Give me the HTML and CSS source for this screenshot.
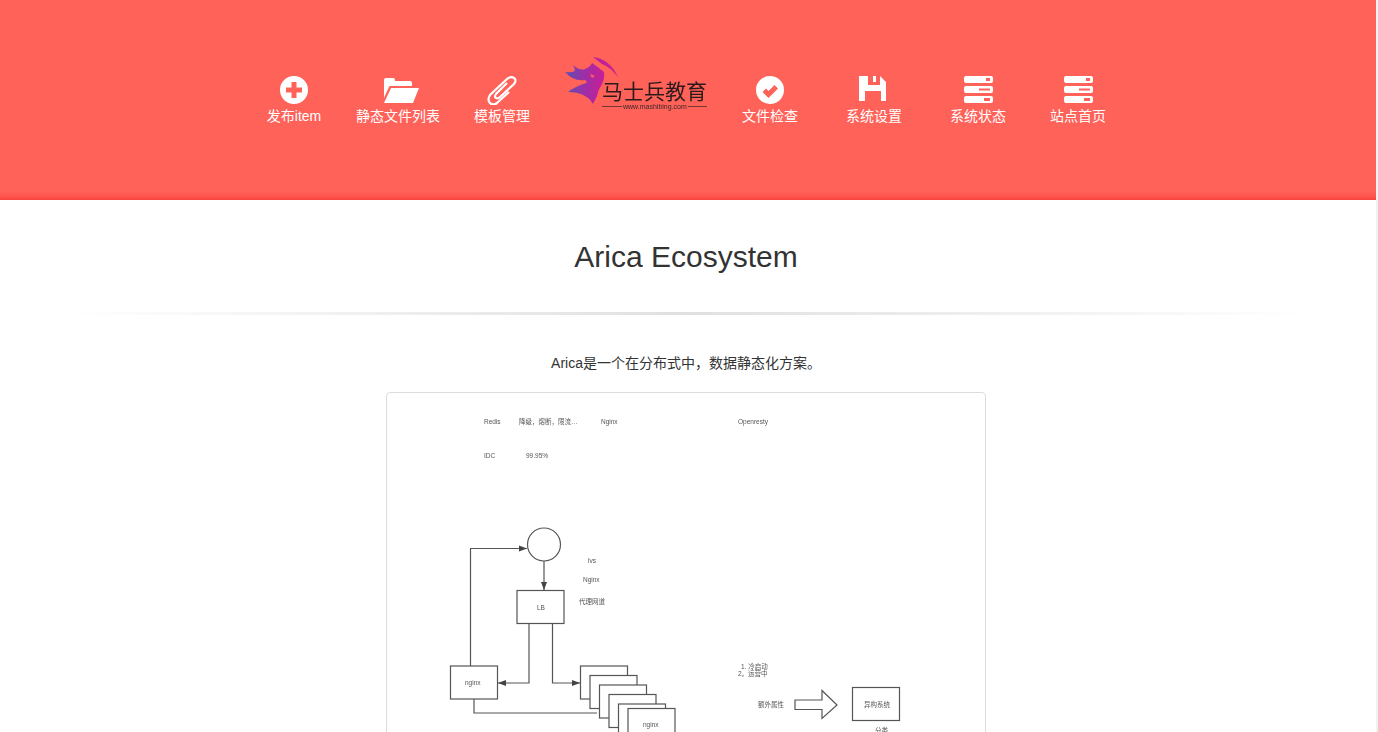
FILE: index.html
```html
<!DOCTYPE html>
<html lang="zh">
<head>
    <meta charset="UTF-8">
    <title>Arica Ecosystem</title>
    <link rel="stylesheet" href="styles.css">
</head>
<body>
    <header class="top">
        <nav class="nav">
            <a class="nav-item" href="#">
                <svg class="icon" viewBox="0 0 28 28"><path fill-rule="evenodd" d="M14 0a14 14 0 1 0 0 28a14 14 0 1 0 0-28zM11.500 6h5v5.500h5.500v5h-5.500v5.500h-5v-5.500H6v-5h5.500z"/></svg>
                <span>发布item</span>
            </a>
            <a class="nav-item" href="#">
                <svg class="icon icon-wide" viewBox="0 0 36 28"><path d="M1 22V4Q1 2 3 2H10Q12 2 12 4V5H27Q29 5 29 7V10H7Q6 10 5.500 12z"/><path d="M8 12H36L30 27H1z"/></svg>
                <span>静态文件列表</span>
            </a>
            <a class="nav-item" href="#">
                <svg class="icon icon-clip" viewBox="0 0 30 29"><path class="clip" d="M20 7L9 18Q7 21 9 22Q11 23 13 21L27 8Q30 4 27 2Q24 0 20 3L3 19Q0 24 3 27Q6 30 10 27L22 16"/></svg>
                <span>模板管理</span>
            </a>
            <a class="nav-logo" href="#">
                <svg class="logo" viewBox="0 0 164 64">
                    <defs>
                        <linearGradient id="flame" gradientUnits="userSpaceOnUse" x1="11" y1="0" x2="64" y2="0">
                            <stop offset="0" stop-color="#5a4fb0"/>
                            <stop offset="0.35" stop-color="#9a30a8"/>
                            <stop offset="0.65" stop-color="#c0209a"/>
                            <stop offset="1" stop-color="#c8288c"/>
                        </linearGradient>
                    </defs>
                    <path fill="url(#flame)" d="M39 3Q56 5 64 23Q56 13 48 10Q44 7 39 3z"/>
                    <path fill="url(#flame)" fill-rule="evenodd" d="M19 11Q26 17 31 15Q36 13 38 9Q44 13 50 18Q51 24 48 30Q44 36 43 42L39 50Q32 38 14 38Q20 33 32 29Q34 28 31 26Q20 28 11 18Q17 19 21 17Q21 14 19 11zM36 20L41 22L38 24z"/>
                    <text class="logo-name" x="48" y="45">马士兵教育</text>
                    <path class="logo-rule" d="M48 52.500H68M134 52.500H153"/>
                    <text class="logo-url" x="69" y="55">www.mashibing.com</text>
                </svg>
            </a>
            <a class="nav-item" href="#">
                <svg class="icon" viewBox="0 0 28 28"><path fill-rule="evenodd" d="M14 0a14 14 0 1 0 0 28a14 14 0 1 0 0-28zM12.500 22L6.500 16L10 12.500L12.500 15L18.500 9L22 12.500z"/></svg>
                <span>文件检查</span>
            </a>
            <a class="nav-item" href="#">
                <svg class="icon icon-disk" viewBox="0 0 27 25"><path fill-rule="evenodd" d="M0 0H9V9H21V0L27 6V25H22V15H6V25H0zM14 0h3v6h-3z"/></svg>
                <span>系统设置</span>
            </a>
            <a class="nav-item" href="#">
                <svg class="icon icon-rows" viewBox="0 0 29 27"><path fill-rule="evenodd" d="M2 0h25a2 2 0 0 1 2 2v3a2 2 0 0 1-2 2H2a2 2 0 0 1-2-2V2a2 2 0 0 1 2-2zM22 2v3h4V2zM2 10h25a2 2 0 0 1 2 2v3a2 2 0 0 1-2 2H2a2 2 0 0 1-2-2v-3a2 2 0 0 1 2-2zM15 12.500v2h11v-2zM2 20h25a2 2 0 0 1 2 2v3a2 2 0 0 1-2 2H2a2 2 0 0 1-2-2v-3a2 2 0 0 1 2-2zM20 22v3h6v-3z"/></svg>
                <span>系统状态</span>
            </a>
            <a class="nav-item nav-item-last" href="#">
                <svg class="icon icon-rows" viewBox="0 0 29 27"><path fill-rule="evenodd" d="M2 0h25a2 2 0 0 1 2 2v3a2 2 0 0 1-2 2H2a2 2 0 0 1-2-2V2a2 2 0 0 1 2-2zM22 2v3h4V2zM2 10h25a2 2 0 0 1 2 2v3a2 2 0 0 1-2 2H2a2 2 0 0 1-2-2v-3a2 2 0 0 1 2-2zM15 12.500v2h11v-2zM2 20h25a2 2 0 0 1 2 2v3a2 2 0 0 1-2 2H2a2 2 0 0 1-2-2v-3a2 2 0 0 1 2-2zM20 22v3h6v-3z"/></svg>
                <span>站点首页</span>
            </a>
        </nav>
    </header>
    <main class="content">
        <h1 class="title">Arica Ecosystem</h1>
        <hr class="divider">
        <p class="lead">Arica是一个在分布式中，数据静态化方案。</p>
        <div class="thumb">
            <svg class="diagram" viewBox="387 393 598 339">
                <g class="lines">
                    <circle cx="544" cy="544.500" r="16.500"/>
                    <rect x="517" y="590.500" width="47" height="33"/>
                    <rect x="450.500" y="666" width="47" height="33"/>
                    <path d="M470.500 666V548.500H527M544 561V590M529 624V683H498M552.500 624V683H580M474 699V713H597"/>
                    <rect x="580.500" y="666" width="47" height="33"/>
                    <rect x="590" y="675.500" width="47" height="33"/>
                    <rect x="599.500" y="685" width="47" height="33"/>
                    <rect x="609" y="694.500" width="47" height="33"/>
                    <rect x="618.500" y="704" width="47" height="33"/>
                    <rect x="628" y="708.500" width="47" height="33"/>
                    <path d="M795 700H822V690.500L837 705L822 718.500V709.500H795z"/>
                    <rect x="852.500" y="687.500" width="47" height="33"/>
                </g>
                <g class="arrows">
                    <path d="M527 548.500l-8-3v6zM544 590l-3-8h6zM498 683l8-3v6zM580 683l-8-3v6z"/>
                </g>
                <g class="labels">
                    <text x="484" y="424">Redis</text>
                    <text x="519" y="424">降级，熔断，限流…</text>
                    <text x="601" y="424">Nginx</text>
                    <text x="738" y="424">Openresty</text>
                    <text x="484" y="458">IDC</text>
                    <text x="526" y="458">99.95%</text>
                    <text x="588" y="563">lvs</text>
                    <text x="583" y="582">Nginx</text>
                    <text x="579" y="604">代理网道</text>
                    <text x="537" y="610">LB</text>
                    <text x="465" y="685">nginx</text>
                    <text x="643" y="727">nginx</text>
                    <text x="741" y="669">1. 冷启动</text>
                    <text x="738" y="676">2。运营中</text>
                    <text x="758" y="707">额外属性</text>
                    <text x="864" y="707">异构系统</text>
                    <text x="875" y="733">分类</text>
                </g>
            </svg>
        </div>
    </main>
</body>
</html>
```

FILE: styles.css
```css
html {
    height: 100%;
    overflow: hidden;
}
body {
    margin: 0;
    height: 100%;
    overflow: hidden;
    border-right: 2px solid #f1f1f1;
    background: #fff;
    color: #333;
    font-family: "Liberation Sans", "Noto Sans CJK SC", sans-serif;
    font-size: 14px;
}
.top {
    height: 200px;
    background: linear-gradient(to bottom, #ff6259 0, #ff6259 191px, #fd5750 196px, #f8433b 200px);
}
.nav {
    display: flex;
    justify-content: center;
    padding-right: 8px;
}
.nav-item {
    display: flex;
    flex-direction: column;
    align-items: center;
    width: 104px;
    padding-top: 76px;
    color: #fff;
    text-decoration: none;
    line-height: 20px;
}
.nav-item-last {
    width: 96px;
}
.nav-logo {
    display: block;
    width: 164px;
    padding-top: 54px;
}
.icon {
    display: block;
    width: 28px;
    height: 28px;
    margin-bottom: 2px;
    fill: #fff;
}
.icon-wide {
    width: 36px;
    margin-left: 6px;
}
.icon-clip {
    width: 30px;
    height: 29px;
    margin-bottom: 1px;
}
.icon-disk {
    width: 27px;
    height: 25px;
    margin-right: 3px;
    margin-bottom: 5px;
}
.icon-rows {
    width: 29px;
    height: 27px;
    margin-bottom: 3px;
}
.clip {
    fill: none;
    stroke: #fff;
    stroke-width: 2.200;
}
.logo {
    display: block;
    width: 164px;
    height: 64px;
    overflow: visible;
    filter: blur(0.3px);
}
.logo-name {
    fill: #2a1a1c;
    font-size: 21px;
}
.logo-url {
    fill: #3a2628;
    font-size: 7px;
}
.logo-rule {
    stroke: #3a2628;
    stroke-width: 0.700;
}
.content {
    padding-right: 4px;
}
.title {
    margin: 0;
    padding-top: 40px;
    text-align: center;
    font-size: 30px;
    font-weight: 400;
    line-height: 33px;
}
.divider {
    height: 3px;
    margin: 39px 60px 0 60px;
    border: 0;
    background: linear-gradient(to right, rgba(0, 0, 0, 0), rgba(0, 0, 0, 0.12) 50%, rgba(0, 0, 0, 0));
}
.lead {
    margin: 38px 0 0 0;
    text-align: center;
    line-height: 20px;
}
.thumb {
    width: 598px;
    height: 500px;
    margin: 19px auto 0 auto;
    border: 1px solid #ddd;
    border-radius: 4px;
}
.diagram {
    display: block;
    width: 598px;
    height: 339px;
    filter: blur(0.35px);
}
.labels text {
    fill: #555;
    font-size: 6.500px;
}
.lines * {
    fill: #fff;
    stroke: #555;
    stroke-width: 1.200;
}
.lines path {
    fill: none;
}
.arrows path {
    fill: #444;
}
```
